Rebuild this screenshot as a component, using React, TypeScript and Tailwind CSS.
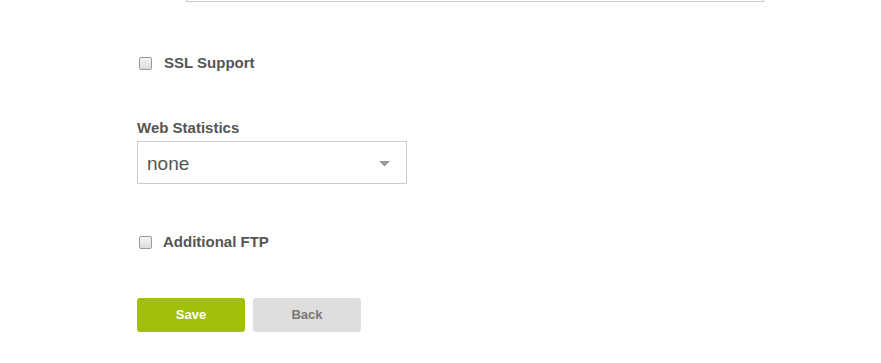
import React from "react";

function Check() {
  return (
    <span className="block w-[13px] h-[13px] rounded-[2px] border border-[#9a9a9a] bg-gradient-to-b from-[#f4f4f4] to-[#dcdcdc]" />
  );
}

export default function App() {
  return (
    <div
      className="w-[881px] h-[363px] bg-white text-[#555] overflow-hidden"
      style={{ fontFamily: '"Liberation Sans", Arial, sans-serif' }}
    >
      <div className="ml-[186px] w-[578px] h-[2px] border-x border-b border-[#c8c8c8]" />
      <div className="pl-[137px]">
        <div className="mt-[51px] h-[20px] flex items-center">
          <span className="ml-[2px]"><Check /></span>
          <span className="ml-[12px] text-[15px] font-bold">SSL Support</span>
        </div>
        <div className="mt-[46px] text-[15px] font-bold leading-[18px]">Web Statistics</div>
        <div className="mt-[4px] w-[270px] h-[43px] border border-[#cccccc] flex items-center justify-between pl-[9px] pr-[16px]">
          <span className="text-[19px] text-[#555] pt-[3px]">none</span>
          <svg width="11" height="6" viewBox="0 0 11 6" className="mt-[3px]">
            <path d="M0 0 L11 0 L5.5 5.5 Z" fill="#999" />
          </svg>
        </div>
        <div className="mt-[48px] h-[20px] flex items-center">
          <span className="ml-[2px]"><Check /></span>
          <span className="ml-[11px] text-[15px] font-bold">Additional FTP</span>
        </div>
        <div className="mt-[46px] flex gap-[8px]">
          <button className="w-[108px] h-[34px] rounded-[3px] bg-[#a2bf0a] text-white text-[13px] font-bold">Save</button>
          <button className="w-[108px] h-[34px] rounded-[3px] bg-[#dfdedd] text-[#777] text-[13px] font-bold">Back</button>
        </div>
      </div>
    </div>
  );
}
